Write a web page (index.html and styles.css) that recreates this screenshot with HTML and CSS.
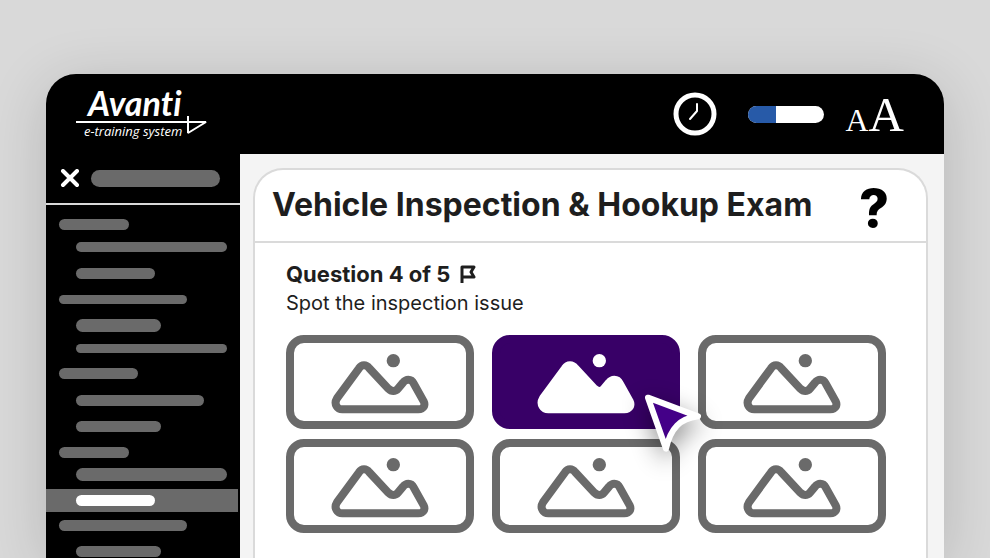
FILE: index.html
```html
<!DOCTYPE html>
<html lang="en">

<head>
    <meta charset="UTF-8">
    <meta name="viewport" content="width=device-width, initial-scale=1.0">
    <title>Vehicle Inspection &amp; Hookup Exam</title>
    <link rel="stylesheet" href="styles.css">
</head>

<body>
    <svg class="defs" aria-hidden="true">
        <symbol id="picture" viewBox="0 0 294 180">
            <circle class="sun" cx="187" cy="20" r="20" />
            <path class="hills" d="M84 43 L18 133 Q10 146 17 157 Q22 166 34 166 H262 Q274 166 279 157 Q282 150 278 142 L248 88 Q243 77 232 77 Q223 77 216 86 L201 104 Q195 111 187 111 Q179 111 172 104 L115 43 Q108 34 99 34 Q90 34 84 43 Z" />
        </symbol>
    </svg>

    <div class="window">
        <header class="topbar">
            <a class="logo" href="#" aria-label="Avanti e-training system">
                <span class="logo-name">Avanti</span>
                <svg class="logo-line" viewBox="0 0 134 20" aria-hidden="true">
                    <path d="M0 7 H130 L112 18 V1" />
                </svg>
                <span class="logo-tag">e-training system</span>
            </a>
            <div class="tools">
                <button class="tool" aria-label="Time">
                    <svg class="clock" viewBox="0 0 44 44">
                        <circle cx="22" cy="22" r="19" />
                        <path d="M24 12 V19 L17 27" />
                    </svg>
                </button>
                <progress class="progress" value="37" max="100" aria-label="Progress"></progress>
                <button class="tool text-size" aria-label="Text size"><span class="small-a">A</span><span class="big-a">A</span></button>
            </div>
        </header>

        <div class="main">
            <nav class="sidebar">
                <div class="sidebar-head">
                    <button class="close" aria-label="Close menu">
                        <svg viewBox="0 0 20 20">
                            <path d="M3 2 L17 16 M17 2 L3 16" />
                        </svg>
                    </button>
                    <span class="bar bar-title"></span>
                </div>
                <ul class="menu">
                    <li><span class="bar w70"></span></li>
                    <li class="sub tight"><span class="bar medium w151"></span></li>
                    <li class="sub loose"><span class="bar w79"></span></li>
                    <li class="loose"><span class="bar thin w128"></span></li>
                    <li class="sub"><span class="bar thick w85"></span></li>
                    <li class="sub tight"><span class="bar thin w151"></span></li>
                    <li><span class="bar w79"></span></li>
                    <li class="sub loose"><span class="bar w128"></span></li>
                    <li class="sub"><span class="bar w85"></span></li>
                    <li><span class="bar w70"></span></li>
                    <li class="sub tighter"><span class="bar thick w151"></span></li>
                    <li class="sub current"><span class="bar w79"></span></li>
                    <li class="after-current"><span class="bar w128"></span></li>
                    <li class="sub"><span class="bar w85"></span></li>
                </ul>
            </nav>

            <main class="content">
                <section class="card">
                    <div class="card-head">
                        <h1>Vehicle Inspection &amp; Hookup Exam</h1>
                        <button class="help" aria-label="Help">?</button>
                    </div>
                    <div class="card-body">
                        <div class="question">
                            <h2>Question 4 of 5</h2>
                            <button class="flag" aria-label="Flag question">
                                <svg viewBox="0 0 16 18">
                                    <path d="M2 18 V2 H14 L11 7 L14 12 H2" />
                                </svg>
                            </button>
                        </div>
                        <p>Spot the inspection issue</p>
                        <div class="answers">
                            <button class="answer" aria-label="Picture 1"><svg><use href="#picture" /></svg></button>
                            <button class="answer selected" aria-label="Picture 2" aria-pressed="true">
                                <svg><use href="#picture" /></svg>
                                <svg class="pointer" viewBox="0 0 174 174">
                                    <path d="M12 11 L162 67 C108 74 80 102 66 164 Z" />
                                </svg>
                            </button>
                            <button class="answer" aria-label="Picture 3"><svg><use href="#picture" /></svg></button>
                            <button class="answer" aria-label="Picture 4"><svg><use href="#picture" /></svg></button>
                            <button class="answer" aria-label="Picture 5"><svg><use href="#picture" /></svg></button>
                            <button class="answer" aria-label="Picture 6"><svg><use href="#picture" /></svg></button>
                        </div>
                    </div>
                </section>
            </main>
        </div>
    </div>
</body>

</html>
```

FILE: styles.css
```css
* {
    box-sizing: border-box;
}

body {
    font-family: Inter, "Liberation Sans", sans-serif;
    background-color: #d9d9d9;
    color: #1e1e1e;
    margin: 0;
    padding: 74px 46px 0;
    height: 100vh;
    overflow: hidden;
}

button {
    background: none;
    border: none;
    padding: 0;
    color: inherit;
    font-family: inherit;
    cursor: pointer;
}

svg {
    display: block;
}

.defs {
    position: absolute;
    width: 0;
    height: 0;
}

.window {
    display: flex;
    flex-direction: column;
    height: 100%;
    overflow: hidden;
    border-radius: 30px 30px 0 0;
    background-color: #000;
    box-shadow: 0 10px 60px rgba(0, 0, 10, 0.16);
}

/* top bar */
.topbar {
    display: flex;
    justify-content: space-between;
    align-items: center;
    flex: none;
    height: 80px;
    padding: 0 40px 0 30px;
    color: #fff;
}

.logo {
    display: grid;
    color: #fff;
    text-decoration: none;
    font-style: italic;
}

.logo-name {
    font-family: Lato, sans-serif;
    font-size: 34px;
    font-weight: 700;
    font-variant-ligatures: none;
    line-height: 28px;
    padding-left: 12px;
}

.logo-line {
    width: 134px;
    height: 20px;
    margin-top: -2px;
    fill: none;
    stroke: #fff;
    stroke-width: 2;
    stroke-linejoin: bevel;
}

.logo-tag {
    font-family: "Open Sans", sans-serif;
    font-size: 13px;
    line-height: 16px;
    margin-top: -12px;
    padding-left: 8px;
}

.tools {
    display: flex;
    align-items: center;
}

.clock {
    width: 44px;
    height: 44px;
    fill: none;
    stroke: #fff;
    stroke-width: 5;
}

.clock path {
    stroke-width: 2;
    stroke-linecap: round;
    stroke-linejoin: round;
}

.progress {
    appearance: none;
    width: 76px;
    height: 17px;
    margin: 0 22px 0 31px;
    border: none;
    border-radius: 9px;
    overflow: hidden;
    background-color: #fff;
}

.progress::-webkit-progress-bar {
    background-color: #fff;
}

.progress::-webkit-progress-value {
    background-color: #275aa8;
}

.text-size {
    display: flex;
    align-items: baseline;
    font-family: "Liberation Serif", serif;
    line-height: 50px;
    padding-top: 6px;
}

.small-a {
    font-size: 32px;
}

.big-a {
    font-size: 49px;
}

/* sidebar */
.main {
    display: flex;
    flex: 1;
    min-height: 0;
}

.sidebar {
    flex: none;
    width: 194px;
    overflow: hidden;
}

.sidebar-head {
    display: flex;
    align-items: center;
    gap: 11px;
    height: 51px;
    padding-left: 14px;
    border-bottom: 2px solid #d9d9d9;
}

.close svg {
    width: 20px;
    height: 20px;
    stroke: #fff;
    stroke-width: 4;
    stroke-linecap: round;
}

.bar {
    display: block;
    height: 11px;
    border-radius: 9px;
    background-color: #6a6a6a;
}

.bar-title {
    width: 129px;
    height: 17px;
}

.thin { height: 9px; }
.medium { height: 10px; }
.thick { height: 13px; }

.w70 { width: 70px; }
.w79 { width: 79px; }
.w85 { width: 85px; }
.w128 { width: 128px; }
.w151 { width: 151px; }

.menu {
    list-style: none;
    margin: 14px 0 0;
    padding: 0;
}

.menu li {
    padding-left: 13px;
}

.menu li + li {
    margin-top: 15px;
}

.menu .sub {
    padding-left: 30px;
}

.menu li.tight { margin-top: 12px; }
.menu li.tighter { margin-top: 10px; }
.menu li.loose { margin-top: 16px; }

.menu li.current {
    margin: 8px 2px 0 0;
    padding-top: 6px;
    padding-bottom: 6px;
    background-color: #6a6a6a;
}

.menu li.after-current { margin-top: 8px; }

.current .bar {
    background-color: #fff;
}

/* exam card */
.content {
    display: flex;
    flex: 1;
    padding: 14px 16px 0 13px;
    background-color: #f4f4f4;
}

.card {
    flex: 1;
    background-color: #fff;
    border: 2px solid #dadada;
    border-bottom: none;
    border-radius: 30px 30px 0 0;
}

.card-head {
    display: flex;
    justify-content: space-between;
    align-items: center;
    height: 73px;
    padding: 0 37px 0 17px;
    border-bottom: 2px solid #dadada;
}

h1 {
    font-size: 32px;
    line-height: 40px;
    margin: 0;
    padding-bottom: 2px;
}

.help {
    color: #000;
    font-size: 52px;
    font-weight: 800;
    line-height: 52px;
    padding-top: 6px;
}

.card-body {
    padding: 17px 40px 0 31px;
}

.question {
    display: flex;
    align-items: center;
    gap: 10px;
}

h2 {
    font-size: 22px;
    line-height: 28px;
    margin: 0;
}

.flag svg {
    width: 16px;
    height: 18px;
    fill: none;
    stroke: #1e1e1e;
    stroke-width: 3;
    stroke-linejoin: round;
}

p {
    font-size: 20px;
    line-height: 30px;
    margin: 0;
}

.answers {
    display: grid;
    grid-template-columns: repeat(3, 1fr);
    gap: 10px 18px;
    margin-top: 17px;
}

.answer {
    position: relative;
    display: flex;
    justify-content: center;
    align-items: center;
    height: 94px;
    padding-top: 4px;
    border: 8px solid #6a6a6a;
    border-radius: 18px;
    color: #6a6a6a;
    fill: none;
}

.answer svg {
    width: 98px;
    height: 60px;
}

.sun {
    fill: currentColor;
}

.hills {
    stroke: currentColor;
    stroke-width: 24;
}

.selected {
    z-index: 1;
    background-color: #380067;
    border-color: #380067;
    color: #fff;
    fill: #fff;
}

.answer .pointer {
    position: absolute;
    right: -30px;
    bottom: -31px;
    width: 58px;
    height: 58px;
    overflow: visible;
    fill: #440088;
    stroke: #fff;
    stroke-width: 18;
    stroke-linejoin: round;
    filter: drop-shadow(0 8px 12px rgba(0, 0, 0, 0.45));
}
```
